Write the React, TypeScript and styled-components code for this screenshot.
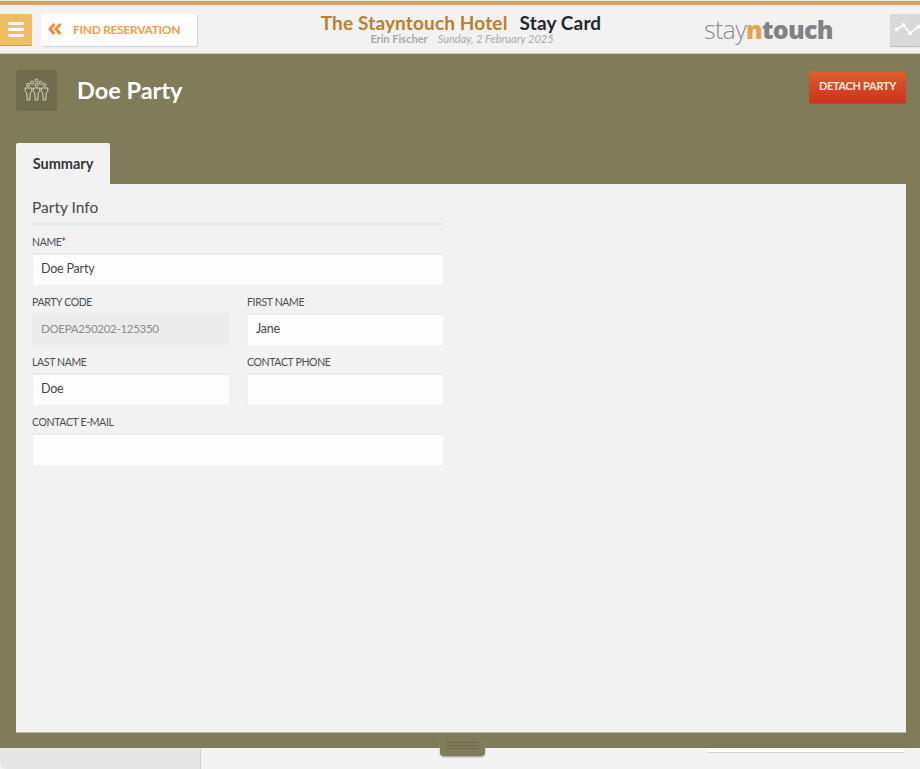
import React from "react";
import styled, { createGlobalStyle } from "styled-components";

const Global = createGlobalStyle`
  html, body { margin: 0; padding: 0; height: 100%; overflow: hidden; }
  body { background: #f2f2f2; font-family: Lato, "Noto Sans", sans-serif; color: #333; }
  #root { height: 769px; }
`;

const Page = styled.div`
  width: 920px;
  height: 769px;
  display: flex;
  flex-direction: column;
  overflow: hidden;
  position: relative;
`;

const Header = styled.header`
  height: 54px;
  box-sizing: border-box;
  border-top: 1px solid #efe6d6;
  background: #f2f2f2;
  display: flex;
  flex-direction: column;
  flex: none;
  border-bottom: 1px solid #c9c8b4;
`;

const Stripe = styled.div`
  height: 4px;
  flex: none;
  background: #d3a25d;
`;

const HeaderRow = styled.div`
  flex: 1;
  display: flex;
  align-items: flex-start;
  padding-top: 9px;
`;

const MenuButton = styled.button`
  width: 32px;
  height: 31px;
  flex: none;
  border: 0;
  border-radius: 0 2px 2px 0;
  background: #f0bd62;
  box-shadow: 0 1px 0 #c99a48;
  padding: 0 8px 0 0;
  display: flex;
  flex-direction: column;
  justify-content: center;
  align-items: flex-end;
  gap: 3px;
`;

const MenuBar = styled.span`
  width: 16px;
  height: 3px;
  border-radius: 1px;
  background: #fff;
`;

const FindButton = styled.button`
  margin-left: 9px;
  width: 156px;
  height: 32px;
  flex: none;
  border: 0;
  border-radius: 2px;
  background: #fdfdfd;
  box-shadow: 1px 1px 1px #d0d0d0;
  display: flex;
  align-items: center;
  padding: 0 0 2px 7px;
  gap: 11px;
  color: #ee9f48;
  font-family: inherit;
  font-size: 12px;
  font-weight: 700;
  letter-spacing: -0.3px;
  white-space: nowrap;
`;

const Titles = styled.div`
  flex: none;
  width: 440px;
  margin-left: 44px;
  margin-top: -1px;
  display: flex;
  flex-direction: column;
  align-items: center;
`;

const TitleLine = styled.div`
  font-size: 19px;
  line-height: 20px;
  font-weight: 700;
  letter-spacing: 0.15px;
  display: flex;
  gap: 12px;
  white-space: nowrap;
`;

const Hotel = styled.span`
  color: #bb7f2d;
`;

const Stay = styled.span`
  color: #25282c;
`;

const SubLine = styled.div`
  display: flex;
  gap: 10px;
  font-size: 11px;
  line-height: 11px;
  color: #a8a8a8;
  padding-left: 2px;
`;

const User = styled.span`
  font-weight: 700;
`;

const DateText = styled.span`
  font-style: italic;
`;

const Logo = styled.div`
  margin-left: 23px;
  width: 160px;
  font-family: "Open Sans", sans-serif;
  font-size: 25px;
  line-height: 30px;
  letter-spacing: -0.7px;
  color: #8b8d90;
  white-space: nowrap;
  flex: none;
`;

const LogoLight = styled.span`
  font-weight: 300;
`;

const LogoN = styled.span`
  font-weight: 800;
  color: #ee9f48;
`;

const LogoBold = styled.span`
  font-weight: 800;
  color: #808285;
`;

const ActivityButton = styled.button`
  margin-left: auto;
  width: 30px;
  height: 32px;
  flex: none;
  border: 0;
  border-radius: 2px 0 0 2px;
  background: #d9d9d9;
  box-shadow: 0 1px 1px #b9b9b9;
  padding: 0;
  display: block;
`;

const ActivityIcon = styled.svg`
  display: block;
`;

const Panel = styled.main`
  height: 694px;
  flex: none;
  box-sizing: border-box;
  background: #807c59;
  padding: 16px 14px 15px 16px;
  display: flex;
  flex-direction: column;
`;

const PanelTop = styled.div`
  height: 73px;
  flex: none;
  display: flex;
  align-items: flex-start;
`;

const PartyIcon = styled.div`
  width: 41px;
  height: 41px;
  flex: none;
  border-radius: 3px;
  background: #6f6c4e;
`;

const PartyName = styled.h1`
  margin: 0 0 0 20px;
  font-size: 23.5px;
  line-height: 40px;
  font-weight: 700;
  color: #fff;
`;

const DetachButton = styled.button`
  margin-left: auto;
  margin-top: 1px;
  width: 97px;
  height: 32px;
  border: 0;
  border-radius: 2px;
  background: linear-gradient(#d9622f, #cf2f1c);
  box-shadow: 0 1px 1px #6d6a49;
  color: #f6e9df;
  font-family: inherit;
  font-size: 11px;
  font-weight: 700;
  letter-spacing: -0.3px;
  padding: 0 0 3px;
  white-space: nowrap;
`;

const Tab = styled.div`
  width: 94px;
  height: 41px;
  flex: none;
  box-sizing: border-box;
  background: #f2f2f2;
  border-radius: 2px 2px 0 0;
  font-size: 14.5px;
  font-weight: 700;
  color: #33363a;
  display: flex;
  align-items: center;
  justify-content: center;
  padding-bottom: 1px;
`;

const Sheet = styled.section`
  flex: 1;
  background: #f2f2f2;
  padding: 12px 16px;
  border-bottom: 1px solid #b9b7a0;
`;

const Form = styled.div`
  width: 411px;
`;

const SectionTitle = styled.h2`
  margin: 0;
  height: 29px;
  box-sizing: border-box;
  border-bottom: 2px solid #e6e6e6;
  font-size: 15.5px;
  line-height: 22px;
  font-weight: 400;
  color: #44474a;
`;

const Fields = styled.div`
  margin-top: 10px;
  display: grid;
  grid-template-columns: 197px 196px;
  column-gap: 18px;
  row-gap: 10px;
`;

const Field = styled.label<{ $wide?: boolean }>`
  display: block;
  grid-column: ${(p) => (p.$wide ? "1 / -1" : "auto")};
`;

const LabelText = styled.span`
  display: block;
  height: 18px;
  font-size: 10.5px;
  line-height: 15px;
  letter-spacing: -0.35px;
  color: #4b4e52;
  white-space: nowrap;
`;

const Required = styled.span`
  color: #d2312a;
  font-weight: 700;
`;

const Input = styled.input`
  display: block;
  width: 100%;
  height: 32px;
  box-sizing: border-box;
  border: 0;
  border-top: 2px solid #ebebeb;
  border-left: 1px solid #ededed;
  outline: 0;
  background: #fdfdfd;
  padding: 0 8px 3px;
  font-family: inherit;
  font-size: 12.5px;
  letter-spacing: -0.2px;
  color: #44474a;
  &:disabled {
    background: #ebebeb;
    color: #8c8c8c;
    opacity: 1;
    font-size: 11.5px;
    letter-spacing: -0.3px;
  }
`;

const Footer = styled.footer`
  flex: 1;
  display: flex;
  position: relative;
  background: #f3f3f3;
`;

const FooterLeft = styled.div`
  width: 201px;
  flex: none;
  box-sizing: border-box;
  background: #e6e6e6;
  border-right: 1px solid #d2d2d2;
  border-bottom-left-radius: 6px;
`;

const FooterCard = styled.div`
  margin-left: auto;
  margin-right: 14px;
  width: 199px;
  height: 5px;
  background: #fdfdfd;
  border-bottom: 1px solid #d5d5d5;
  border-right: 1px solid #dedede;
  box-sizing: border-box;
  border-radius: 0 0 2px 2px;
`;

const Handle = styled.div`
  position: absolute;
  left: 440px;
  top: -8px;
  width: 45px;
  height: 16px;
  box-sizing: border-box;
  border-radius: 0 0 4px 4px;
  background: #807c59;
  box-shadow: 0 1px 2px #9a9a9a;
  padding: 2px 6px 0;
  display: flex;
  flex-direction: column;
  gap: 2px;
`;

const HandleLine = styled.span`
  height: 1px;
  background: #6d6a49;
`;

const BurgerLines = [0, 1, 2];
const bodyCenters = [12.5, 20.5, 28.5];
const headPoints = [
  [20.5, 10.5],
  [16, 12.7],
  [24.5, 12.7],
  [12, 14.8],
  [20.5, 14.8],
  [28.5, 14.8],
];

export default function App() {
  return (
    <Page>
      <Global />
      <Header>
        <Stripe />
        <HeaderRow>
          <MenuButton aria-label="Menu">
            {BurgerLines.map((i) => (
              <MenuBar key={i} />
            ))}
          </MenuButton>
          <FindButton>
            <svg width="14" height="12" viewBox="0 0 14 12" fill="none" stroke="#ee8f38" strokeWidth="3">
              <path d="M6.5 1 2 6l4.5 5M12.5 1 8 6l4.5 5" />
            </svg>
            FIND RESERVATION
          </FindButton>
          <Titles>
            <TitleLine>
              <Hotel>The Stayntouch Hotel</Hotel>
              <Stay>Stay Card</Stay>
            </TitleLine>
            <SubLine>
              <User>Erin Fischer</User>
              <DateText>Sunday, 2 February 2025</DateText>
            </SubLine>
          </Titles>
          <Logo>
            <LogoLight>stay</LogoLight>
            <LogoN>n</LogoN>
            <LogoBold>touch</LogoBold>
          </Logo>
          <ActivityButton aria-label="Activity">
            <ActivityIcon width="30" height="32" viewBox="0 0 30 32" fill="none" stroke="#fff" strokeWidth="1.5">
              <path d="M6.7 15.3 13.3 11 20 19.3l8.3-6.6" />
              <circle cx="6.7" cy="15.3" r="1.3" fill="#fff" />
              <circle cx="13.3" cy="11" r="1.3" fill="#fff" />
              <circle cx="20" cy="19.3" r="1.3" fill="#fff" />
              <circle cx="28.3" cy="12.7" r="1.3" fill="#fff" />
            </ActivityIcon>
          </ActivityButton>
        </HeaderRow>
      </Header>
      <Panel>
        <PanelTop>
          <PartyIcon>
            <svg width="41" height="41" viewBox="0 0 41 41" fill="none" stroke="#d8d6c6" strokeWidth="1">
              {headPoints.map(([cx, cy]) => (
                <circle key={`${cx}-${cy}`} cx={cx} cy={cy} r="1.5" />
              ))}
              {bodyCenters.map((c) => (
                <path key={c} d={`M${c - 3.5} 18h7l-.4 3.5-1.3 1.5-.6 7h-2.4l-.6-7-1.3-1.5z`} />
              ))}
            </svg>
          </PartyIcon>
          <PartyName>Doe Party</PartyName>
          <DetachButton>DETACH PARTY</DetachButton>
        </PanelTop>
        <Tab>Summary</Tab>
        <Sheet>
          <Form>
            <SectionTitle>Party Info</SectionTitle>
            <Fields>
              <Field $wide>
                <LabelText>
                  NAME<Required>*</Required>
                </LabelText>
                <Input defaultValue="Doe Party" />
              </Field>
              <Field>
                <LabelText>PARTY CODE</LabelText>
                <Input disabled defaultValue="DOEPA250202-125350" />
              </Field>
              <Field>
                <LabelText>FIRST NAME</LabelText>
                <Input defaultValue="Jane" />
              </Field>
              <Field>
                <LabelText>LAST NAME</LabelText>
                <Input defaultValue="Doe" />
              </Field>
              <Field>
                <LabelText>CONTACT PHONE</LabelText>
                <Input />
              </Field>
              <Field $wide>
                <LabelText>CONTACT E-MAIL</LabelText>
                <Input />
              </Field>
            </Fields>
          </Form>
        </Sheet>
      </Panel>
      <Footer>
        <FooterLeft />
        <FooterCard />
        <Handle>
          <HandleLine />
          <HandleLine />
          <HandleLine />
        </Handle>
      </Footer>
    </Page>
  );
}
